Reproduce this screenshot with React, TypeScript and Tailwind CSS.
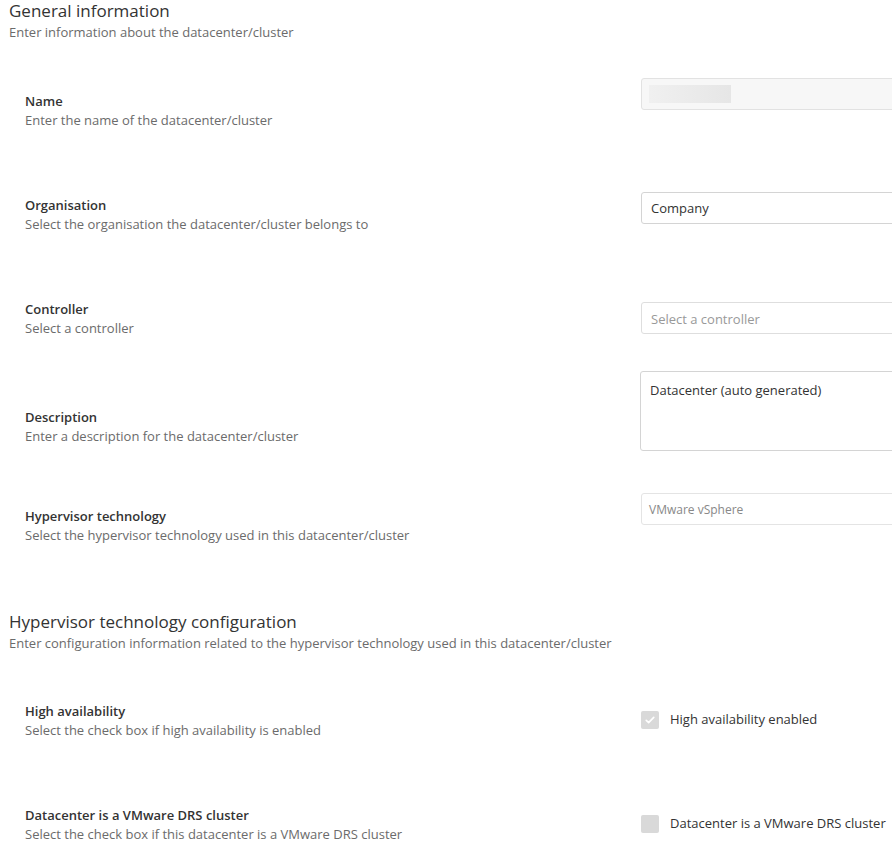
import React from 'react';

type RowProps = {
  label: string;
  hint: string;
  height: string;
  labelPad: string;
  children: React.ReactNode;
};

function Row({ label, hint, height, labelPad, children }: RowProps) {
  return (
    <div className={`flex ${height}`}>
      <div className={`w-[641px] shrink-0 pl-[25px] ${labelPad}`}>
        <p className="text-[13px] leading-[19px] font-semibold text-[#333]">{label}</p>
        <p className="text-[13px] leading-[19px] text-[#6b6b6b]">{hint}</p>
      </div>
      <div className="flex-1">{children}</div>
    </div>
  );
}

function Check({ checked, label }: { checked?: boolean; label: string }) {
  return (
    <div className="flex items-center gap-[11px] pt-[8px]">
      <span className="flex h-[18px] w-[18px] items-center justify-center rounded-[2px] bg-[#d9d9d9]">
        {checked && (
          <svg viewBox="0 0 16 16" className="h-[12px] w-[12px]" fill="none" stroke="white" strokeWidth="2.2" strokeLinecap="round" strokeLinejoin="round">
            <path d="M3 8.5l3.2 3L13 4.5" />
          </svg>
        )}
      </span>
      <span className="text-[13px] text-[#333]">{label}</span>
    </div>
  );
}

export default function App() {
  return (
    <div className="min-h-screen w-[892px] overflow-hidden bg-white font-['Open_Sans',sans-serif]">
      <section className="pl-[9px]">
        <h2 className="text-[17px] leading-[22px] text-[#333]">General information</h2>
        <p className="text-[13px] leading-[21px] text-[#6b6b6b]">Enter information about the datacenter/cluster</p>
      </section>

      <div className="mt-[35px]">
        <Row label="Name" hint="Enter the name of the datacenter/cluster" height="h-[114px]" labelPad="pt-[14px]">
          <div className="flex h-[32px] w-[300px] items-center rounded-[3px] border border-[#e2e2e2] bg-[#f7f7f7] px-[7px]">
            <span className="h-[18px] w-[82px] bg-gradient-to-r from-[#f0f0f0] to-[#e6e6e6]" />
          </div>
        </Row>
        <Row label="Organisation" hint="Select the organisation the datacenter/cluster belongs to" height="h-[108px]" labelPad="pt-[4px]">
          <div className="flex h-[32px] w-[300px] items-center rounded-[3px] border border-[#d4d4d4] bg-white px-[9px] pt-[2px] text-[13px] text-[#333]">
            Company
          </div>
        </Row>
        <Row label="Controller" hint="Select a controller" height="h-[71px]" labelPad="pt-[0px]">
          <div className="mt-[2px] flex h-[32px] w-[300px] items-center rounded-[3px] border border-[#dedede] bg-white px-[9px] pt-[3px] text-[13px] text-[#999]">
            Select a controller
          </div>
        </Row>
        <Row label="Description" hint="Enter a description for the datacenter/cluster" height="h-[122px]" labelPad="pt-[37px]">
          <div className="-ml-px h-[80px] w-[300px] rounded-[3px] border border-[#d4d4d4] bg-white px-[9px] pt-[9px] text-[13px] text-[#333]">
            Datacenter (auto generated)
          </div>
        </Row>
        <Row label="Hypervisor technology" hint="Select the hypervisor technology used in this datacenter/cluster" height="h-[118px]" labelPad="pt-[14px]">
          <div className="flex h-[32px] w-[300px] items-center rounded-[3px] border border-[#e4e4e4] bg-white px-[7px] pt-[1px] text-[12px] text-[#888]">
            VMware vSphere
          </div>
        </Row>
      </div>

      <section className="pl-[9px]">
        <h2 className="text-[17px] leading-[22px] text-[#333]">Hypervisor technology configuration</h2>
        <p className="text-[13px] leading-[21px] text-[#6b6b6b]">
          Enter configuration information related to the hypervisor technology used in this datacenter/cluster
        </p>
      </section>

      <div className="mt-[48px]">
        <Row label="High availability" hint="Select the check box if high availability is enabled" height="h-[104px]" labelPad="pt-[0px]">
          <Check checked label="High availability enabled" />
        </Row>
        <Row label="Datacenter is a VMware DRS cluster" hint="Select the check box if this datacenter is a VMware DRS cluster" height="h-[60px]" labelPad="pt-[0px]">
          <Check label="Datacenter is a VMware DRS cluster" />
        </Row>
      </div>
    </div>
  );
}
